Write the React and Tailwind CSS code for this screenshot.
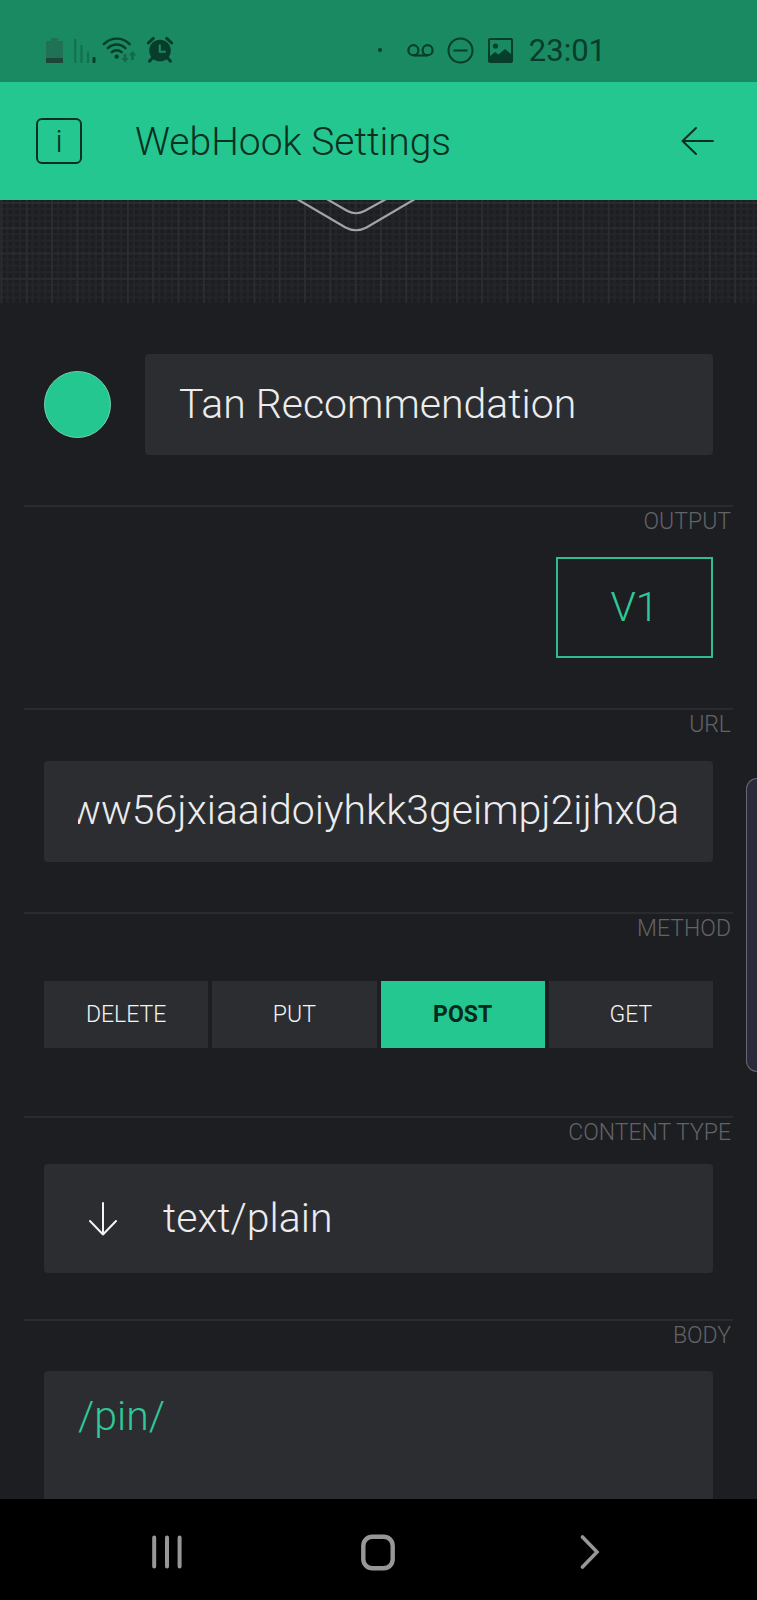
import { useEffect, useRef, useState } from "react";

const METHODS = ["DELETE", "PUT", "POST", "GET"];

function StatusBar() {
  return (
    <div className="flex h-[82px] items-center justify-between bg-[#1a8a63] pt-[18px] pr-[151px] pl-[46px] text-[#073d2b]">
      <div className="flex items-center">
        <svg className="mr-[11px]" width="17" height="26" viewBox="0 0 17 26" aria-label="Battery">
          <path d="M0 4h5V1h7v3h5v17H0z" fill="#1f7256" />
          <path d="M0 21h17v5H0z" fill="#1d4636" />
        </svg>
        <svg className="mr-[6px]" width="22" height="26" viewBox="0 0 22 26" aria-label="Signal">
          <path d="M1.200 2v24M7.500 8v18M14 14.500v11.500" stroke="#14704f" strokeWidth="2.200" fill="none" />
          <rect x="18.500" y="20" width="3" height="6" rx="1" fill="#073d2b" />
        </svg>
        <svg className="mr-[11px]" width="34" height="26" viewBox="0 0 34 26" fill="none" aria-label="Wi-Fi">
          <g stroke="#073d2b" strokeWidth="2.400" strokeLinecap="round">
            <path d="M1.800 7.200C9.300-.3 20.300-.3 27.600 7.200" />
            <path d="M5.800 11.200c5.300-5 12.500-5 17.600 0" />
            <path d="M9.800 15.200c2.800-2.600 7-2.600 9.800 0" />
          </g>
          <circle cx="14.700" cy="19.700" r="2.100" fill="#073d2b" />
          <path d="M21.800 17h2.600v4h2.400l-3.700 4.500-3.700-4.500h2.400zM29.200 23h2.600v-4.500h2.400L30.500 14l-3.700 4.500h2.400z" fill="#126849" />
        </svg>
        <svg width="26" height="26" viewBox="0 0 26 26" aria-label="Alarm">
          <circle cx="13" cy="13.500" r="10.800" fill="#073d2b" />
          <path d="M1.300 6l5-4.600M24.700 6l-5-4.600M5.500 21l-3 3.200M20.500 21l3 3.200" stroke="#073d2b" strokeWidth="3" strokeLinecap="round" />
          <path d="M12.800 7.500v7.300h6" stroke="#1a8a63" strokeWidth="2" fill="none" />
        </svg>
      </div>
      <div className="flex items-center">
        <span className="mr-[25px] size-1 rounded-full bg-[#073d2b]" />
        <svg className="mr-[13px]" width="27" height="13" viewBox="0 0 27 13" fill="none" stroke="#073d2b" strokeWidth="2.200" aria-label="Voicemail">
          <circle cx="6.400" cy="6.200" r="5" />
          <circle cx="20.600" cy="6.200" r="5" />
          <path d="M6.400 11.500h14.200" />
        </svg>
        <svg className="mr-[14px]" width="27" height="27" viewBox="0 0 27 27" fill="none" stroke="#073d2b" strokeWidth="2" aria-label="Do not disturb">
          <circle cx="13.500" cy="13.500" r="12" />
          <path d="M6.500 13.500h14" />
        </svg>
        <svg className="mr-4" width="25" height="25" viewBox="0 0 25 25" aria-label="Picture">
          <rect x="1" y="1" width="23" height="23" rx="1" fill="none" stroke="#073d2b" strokeWidth="2" />
          <circle cx="7.500" cy="8" r="2.600" fill="#073d2b" />
          <path d="M1 19l6-5 3.500 2.500L17 11l7 6v7H1z" fill="#073d2b" />
        </svg>
        <span className="pt-0.5 text-[31px] leading-8">23:01</span>
      </div>
    </div>
  );
}

function Header() {
  return (
    <header className="flex h-[118px] items-center bg-[#24c78f] pr-[43px] pl-[36px] text-[#0b3022]">
      <button
        type="button"
        aria-label="Info"
        className="flex size-[46px] items-center justify-center rounded-md border-2 border-[#0b3022] text-[32px] leading-8 font-light"
      >
        i
      </button>
      <h1 className="ml-[53px] flex-1 pt-0.5 text-[39px] leading-[48px] font-light">WebHook Settings</h1>
      <button type="button" aria-label="Back">
        <svg width="33" height="30" viewBox="0 0 33 30" fill="none" stroke="#0b3022" strokeWidth="2" strokeLinecap="round" strokeLinejoin="round">
          <path d="M32 15H1.500M15 2L1.500 15 15 28" />
        </svg>
      </button>
    </header>
  );
}

function Banner() {
  return (
    <svg className="block h-[103px] w-full" aria-hidden="true">
      <defs>
        <pattern id="grid" x="0.500" y="2" width="25.300" height="25.300" patternUnits="userSpaceOnUse">
          <path
            d="M6.800 0v25.300M13.100 0v25.300M19.400 0v25.300M0 6.800h25.300M0 13.100h25.300M0 19.400h25.300"
            stroke="#242529"
            strokeWidth="2"
          />
          <path d="M.9 0v25.300M0 .9h25.300" stroke="#2c2d31" strokeWidth="1.800" />
        </pattern>
      </defs>
      <rect width="100%" height="100%" fill="url(#grid)" />
      <g fill="none" stroke="#a3a4a7" strokeWidth="2.200">
        <path d="M297-1L345.500 27.500q10.500 5.500 21 0L415-1" />
        <path d="M325-2L347.500 11q8.500 4.500 17 0L388-2" />
      </g>
    </svg>
  );
}

function Section({ label, htmlFor, className, children }) {
  return (
    <section className={`mx-6 border-t-2 border-[#2a2b2f] ${className}`}>
      <div className="flex justify-end pr-0.5 text-[23px] leading-[30px] font-light text-[#626367]">
        <label htmlFor={htmlFor}>{label}</label>
      </div>
      {children}
    </section>
  );
}

export default function App() {
  const [method, setMethod] = useState("POST");
  const urlRef = useRef(null);

  useEffect(() => {
    urlRef.current.scrollLeft = urlRef.current.scrollWidth;
  }, []);

  return (
    <div className="relative flex min-h-screen flex-col bg-[#1d1e22] font-['Roboto','Liberation_Sans',sans-serif] text-[#ececee]">
      <StatusBar />
      <Header />
      <Banner />
      <main className="flex flex-1 flex-col">
        <div className="flex items-center gap-[34px] pt-[51px] pr-11 pb-[50px] pl-11">
          <button type="button" aria-label="Color" className="size-[67px] shrink-0 rounded-full border border-[#6fd3b0] bg-[#24c78f]" />
          <input
            aria-label="Name"
            defaultValue="Tan Recommendation"
            className="h-[101px] min-w-0 flex-1 rounded bg-[#2c2d31] px-[34px] pb-0.5 text-[41px] font-light outline-none"
          />
        </div>

        <Section label="OUTPUT" htmlFor="output" className="pb-[50px]">
          <div className="mt-5 flex justify-end px-5">
            <button id="output" type="button" className="h-[101px] w-[157px] border-2 border-[#2fbd8d] text-[41px] font-light text-[#2fc996]">
              V1
            </button>
          </div>
        </Section>

        <Section label="URL" htmlFor="url" className="pb-[50px]">
          <div className="mx-5 mt-[21px] flex h-[101px] rounded bg-[#2c2d31] px-[34px] pb-0.5">
            <input
              id="url"
              ref={urlRef}
              defaultValue="ww56jxiaaidoiyhkk3geimpj2ijhx0a"
              className="w-full min-w-0 bg-transparent text-[41px] font-light outline-none"
            />
          </div>
        </Section>

        <Section label="METHOD" htmlFor="method-POST" className="pb-[68px]">
          <div className="mx-5 mt-[37px] grid grid-cols-4 gap-1">
            {METHODS.map((m) => (
              <button
                key={m}
                id={`method-${m}`}
                type="button"
                aria-pressed={m === method}
                onClick={() => setMethod(m)}
                className={
                  m === method
                    ? "h-[67px] bg-[#24c78f] pt-0.5 text-[23px] font-bold text-[#06291c]"
                    : "h-[67px] bg-[#2c2d31] pt-0.5 text-[23px] font-light text-[#f4f4f5]"
                }
              >
                {m}
              </button>
            ))}
          </div>
        </Section>

        <Section label="CONTENT TYPE" htmlFor="content-type" className="pb-[46px]">
          <div className="mx-5 mt-4 flex h-[109px] items-center rounded bg-[#2c2d31] pl-[45px]">
            <svg width="28" height="34" viewBox="0 0 28 34" fill="none" stroke="#f4f4f5" strokeWidth="2" strokeLinecap="round" strokeLinejoin="round" aria-hidden="true">
              <path d="M14 1v31.500M1 19l13 13.500L27 19" />
            </svg>
            <select id="content-type" className="ml-[46px] h-full flex-1 appearance-none bg-transparent text-[41px] font-light outline-none">
              <option>text/plain</option>
            </select>
          </div>
        </Section>

        <Section label="BODY" htmlFor="body" className="flex flex-1 flex-col">
          <textarea
            id="body"
            defaultValue="/pin/"
            className="mx-5 mt-5 min-h-[127px] flex-1 resize-none rounded-t bg-[#2c2d31] px-[34px] pt-[19px] text-[41px] leading-[52px] font-light text-[#2fc996] outline-none"
          />
        </Section>
      </main>

      <nav className="grid h-[101px] grid-cols-3 place-items-center bg-black px-[61px] pt-[5px]">
        <button type="button" aria-label="Recents">
          <svg width="30" height="34" viewBox="0 0 30 34" stroke="#979797" strokeWidth="4" strokeLinecap="round">
            <path d="M2.200 2.500v29M15 2.500v29M27.600 2.500v29" />
          </svg>
        </button>
        <button type="button" aria-label="Home">
          <svg width="34" height="37" viewBox="0 0 34 37" fill="none" stroke="#979797" strokeWidth="4.400">
            <rect x="2.300" y="2.700" width="29.400" height="31.600" rx="9" />
          </svg>
        </button>
        <button type="button" aria-label="Back">
          <svg width="20" height="36" viewBox="0 0 20 36" fill="none" stroke="#979797" strokeWidth="3.600" strokeLinecap="round">
            <path d="M2.500 3L17 18 2.500 33" />
          </svg>
        </button>
      </nav>

      <div className="absolute top-[778px] right-0 h-[294px] w-[11px] rounded-l-xl border border-r-0 border-[#68666f] bg-[#2b293a]" />
    </div>
  );
}
